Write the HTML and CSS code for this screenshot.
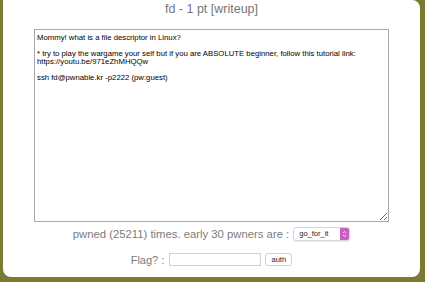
FILE: index.html
```html
<!DOCTYPE html>
<html lang="en">
<head>
    <meta charset="UTF-8">
    <title>fd - pwnable.kr</title>
    <link rel="stylesheet" href="styles.css">
</head>
<body>
    <div class="challenge-box">
        <div class="challenge-title">fd - 1 pt [writeup]</div>
        <textarea class="challenge-desc" readonly>Mommy! what is a file descriptor in Linux?

* try to play the wargame your self but if you are ABSOLUTE beginner, follow this tutorial link:
https://youtu.be/971eZhMHQQw

ssh fd@pwnable.kr -p2222 (pw:guest)
</textarea>
        <div class="pwned-row">
            <span>pwned (25211) times. early 30 pwners are :</span>
            <div class="pwner-select">
                <span>go_for_it</span>
                <span class="select-arrows">
                    <svg width="5" height="8" viewBox="0 0 5 8"><path d="M1 3 L2.5 1.5 L4 3 M1 5 L2.5 6.5 L4 5" fill="none" stroke="#fff" stroke-width="0.8"/></svg>
                </span>
            </div>
        </div>
        <div class="flag-row">
            <span>Flag? :</span>
            <input type="text" class="flag-input">
            <button class="auth-btn">auth</button>
        </div>
    </div>
</body>
</html>
```

FILE: styles.css
```css
body {
    margin: 0;
    background: #7a7a32;
    font-family: 'Liberation Sans', Arial, sans-serif;
}
.challenge-box {
    background: white;
    margin: 0 5px 0 3px;
    height: 277px;
    border-radius: 0 8px 8px 8px;
    display: flex;
    flex-direction: column;
    align-items: center;
    box-sizing: border-box;
}
.challenge-title {
    font-size: 12.5px;
    color: #777;
    line-height: 18px;
    height: 29px;
}
.challenge-desc {
    width: 355px;
    height: 193px;
    box-sizing: border-box;
    border: 1px solid #a9a9a9;
    font-family: 'Liberation Sans', Arial, sans-serif;
    font-size: 7.75px;
    line-height: 8px;
    padding: 4px 2px;
    color: #000;
    margin: 0;
    resize: both;
    outline: none;
}
.pwned-row {
    display: flex;
    align-items: center;
    gap: 4px;
    margin-top: 4px;
    font-size: 11.3px;
    color: #7b7b7b;
    height: 15px;
}
.pwner-select {
    display: flex;
    align-items: center;
    justify-content: space-between;
    width: 57px;
    height: 14px;
    box-sizing: border-box;
    border: 1px solid #d4d4d4;
    border-radius: 3px;
    padding-left: 5px;
    font-size: 7.5px;
    color: #222;
    box-shadow: 0 1px 1px rgba(0,0,0,0.08);
}
.select-arrows {
    width: 9px;
    height: 12px;
    background: #c85fc4;
    border-radius: 0 2px 2px 0;
    display: flex;
    align-items: center;
    justify-content: center;
}
.flag-row {
    display: flex;
    align-items: center;
    gap: 5px;
    margin-top: 12px;
    font-size: 11px;
    color: #7b7b7b;
}
.flag-input {
    width: 92px;
    height: 13px;
    box-sizing: border-box;
    border: 1px solid #d0d0d0;
    padding: 0;
    margin: 0;
}
.auth-btn {
    height: 13px;
    width: 27px;
    padding: 0;
    margin-left: -1px;
    border: 1px solid #d0d0d0;
    border-radius: 3px;
    background: #fff;
    font-family: 'Liberation Sans', Arial, sans-serif;
    font-size: 7.5px;
    color: #222;
}
```
